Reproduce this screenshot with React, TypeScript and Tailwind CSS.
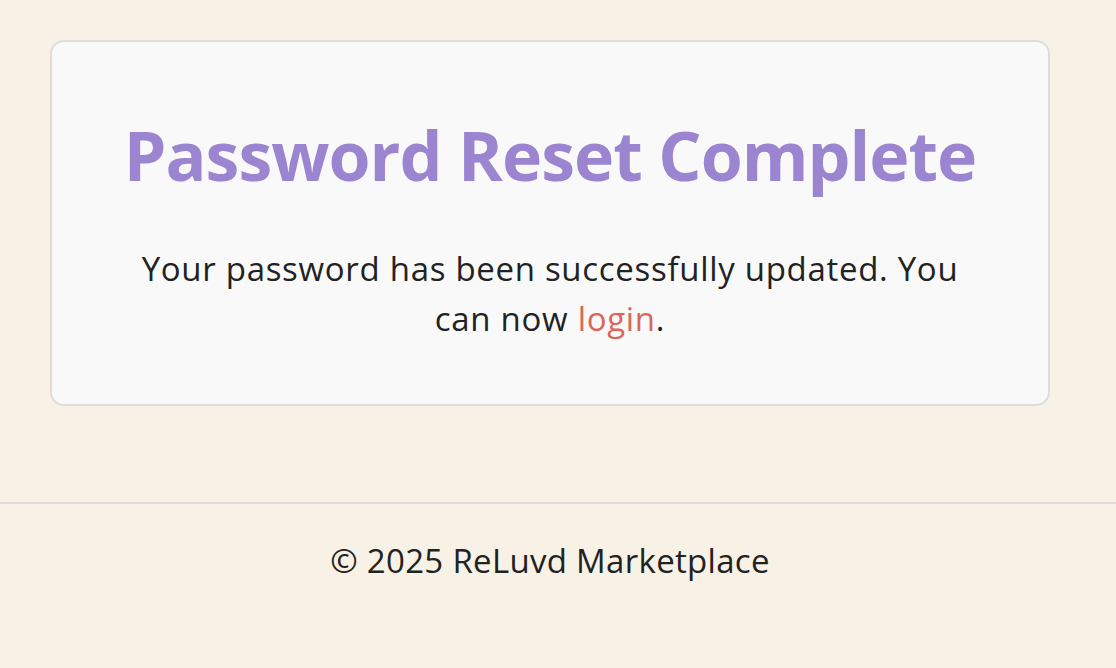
export default function App() {
  return (
    <div
      className="min-h-screen bg-[#f8f1e6] text-[#222222]"
      style={{ fontFamily: '"Open Sans", "Noto Sans", sans-serif' }}
    >
      <main className="w-[1100px] px-[50px] pt-[40px] pb-[96px]">
        <div className="rounded-[14px] border-2 border-[#dddddd] bg-[#f9f9f9] px-[60px] pt-[70px] pb-[60px] text-center">
          <h1 className="whitespace-nowrap text-[68px] font-bold leading-[86px] tracking-[-1px] text-[#9b85d1]">
            Password Reset Complete
          </h1>
          <p className="mx-auto mt-[46px] max-w-[840px] text-[33px] leading-[50px] tracking-[0.7px]">
            Your password has been successfully updated. You can now{' '}
            <a href="#" className="text-[#d8675a]">login</a>.
          </p>
        </div>
      </main>
      <footer className="border-t-2 border-[#dddddd] pt-[32px]">
        <p className="w-[1100px] text-center text-[33px] leading-[50px] tracking-[0.3px]">
          © 2025 ReLuvd Marketplace
        </p>
      </footer>
    </div>
  )
}
